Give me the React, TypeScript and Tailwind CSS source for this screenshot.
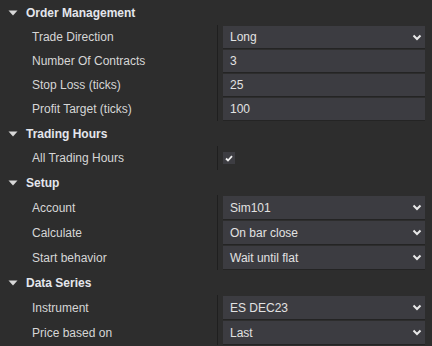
import React from "react";

type Prop = { label: string; value?: string; select?: boolean; check?: boolean };
type Section = { title: string; rowH: string; props: Prop[] };

const sections: Section[] = [
  {
    title: "Order Management",
    rowH: "h-[24px]",
    props: [
      { label: "Trade Direction", value: "Long", select: true },
      { label: "Number Of Contracts", value: "3" },
      { label: "Stop Loss (ticks)", value: "25" },
      { label: "Profit Target (ticks)", value: "100" },
    ],
  },
  {
    title: "Trading Hours",
    rowH: "h-[24px]",
    props: [{ label: "All Trading Hours", check: true }],
  },
  {
    title: "Setup",
    rowH: "h-[25px]",
    props: [
      { label: "Account", value: "Sim101", select: true },
      { label: "Calculate", value: "On bar close", select: true },
      { label: "Start behavior", value: "Wait until flat", select: true },
    ],
  },
  {
    title: "Data Series",
    rowH: "h-[25px]",
    props: [
      { label: "Instrument", value: "ES DEC23", select: true },
      { label: "Price based on", value: "Last", select: true },
    ],
  },
];

function Chevron() {
  return (
    <svg width="10" height="7" viewBox="0 0 10 7" className="shrink-0">
      <polyline points="1.5,1.5 5,5 8.5,1.5" fill="none" stroke="#e8e8e8" strokeWidth="2" />
    </svg>
  );
}

function Row({ p, rowH }: { p: Prop; rowH: string }) {
  return (
    <div className={`flex ${rowH}`}>
      <div className="flex w-[217px] items-center pl-[32px] text-[#d6d6d6]">{p.label}</div>
      <div className="w-px bg-[#1f1f1f]" />
      <div className="flex flex-1 items-stretch pt-[1px] pb-[1px] pl-[5px] pr-[7px]">
        {p.check ? (
          <div className="flex items-center">
            <div className="flex h-[12px] w-[12px] items-center justify-center bg-[#3d3d42]">
              <svg width="8" height="7" viewBox="0 0 8 7">
                <polyline points="1,3.5 3,5.5 7,1.2" fill="none" stroke="#f0f0f0" strokeWidth="1.8" />
              </svg>
            </div>
          </div>
        ) : (
          <div className="flex flex-1 items-center justify-between bg-[#3c3c41] pl-[7px] pr-[3px] text-[#e2e2e2] shadow-[0_1px_0_#242424]">
            <span>{p.value}</span>
            {p.select && <Chevron />}
          </div>
        )}
      </div>
    </div>
  );
}

export default function App() {
  return (
    <div
      className="h-[346px] w-[432px] overflow-hidden bg-[#2d2d2d] text-[12px]"
      style={{ fontFamily: '"Liberation Sans", Arial, sans-serif' }}
    >
      {sections.map((s) => (
        <div key={s.title}>
          <div className="flex h-[25px] items-center pl-[8px] font-bold text-[#e4e6ec]">
            <svg width="10" height="6" viewBox="0 0 10 6" className="mr-[8px]">
              <polygon points="0.5,0.5 9.5,0.5 5,5.5" fill="#d8d8d8" />
            </svg>
            {s.title}
          </div>
          {s.props.map((p) => (
            <Row key={p.label} p={p} rowH={s.rowH} />
          ))}
        </div>
      ))}
    </div>
  );
}
